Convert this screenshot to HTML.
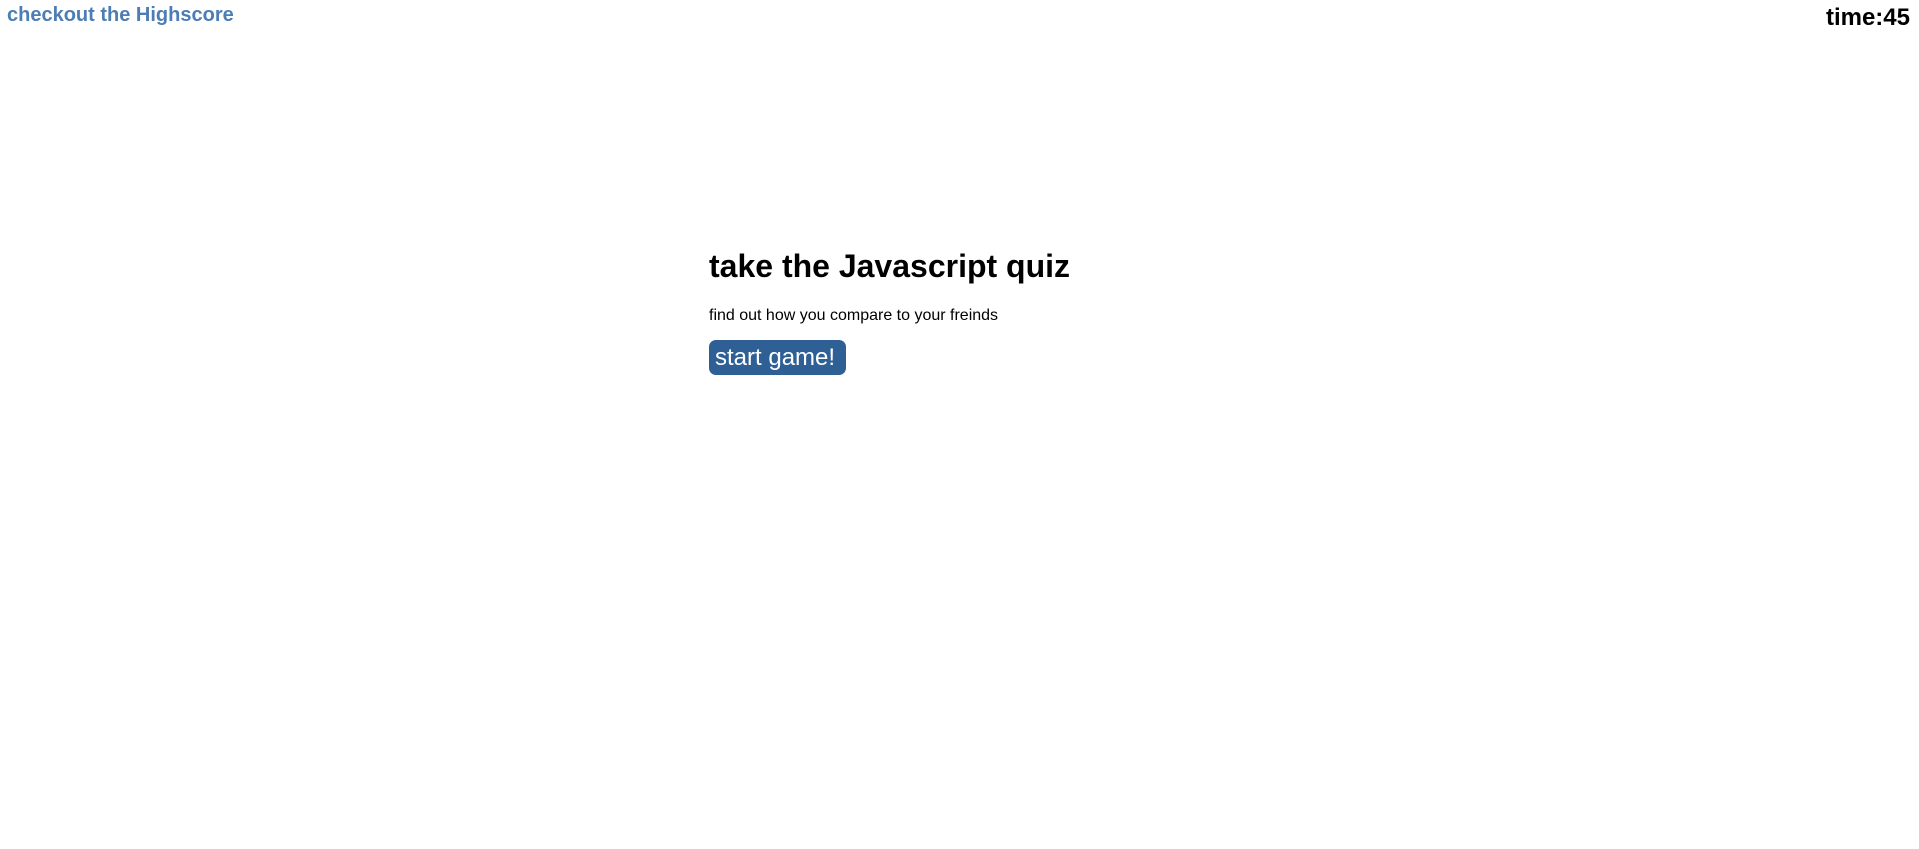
<!DOCTYPE html>
<html><head><style>
body{margin:0;width:1919px;height:849px;background:#fff;font-family:"Liberation Sans",Arial,sans-serif;position:relative;overflow:hidden}
.hs{position:absolute;left:7px;top:4px;font-size:20px;font-weight:bold;color:#4d7db5;text-decoration:none}
.time{position:absolute;right:9px;top:4px;font-size:24px;font-weight:bold;color:#000}
.main{position:absolute;left:709px;top:246px}
h1{margin:0;font-size:32px;font-weight:bold;line-height:40px}
p{margin:20px 0 0;font-size:16px;line-height:20px}
button{display:block;margin-top:14px;background:#2e6096;color:#fff;border:none;border-radius:7px;font-family:"Liberation Sans",Arial,sans-serif;font-size:24px;padding:2px 6px;height:35px;width:137px;text-align:left;line-height:31px}
</style></head><body>
<a class="hs" href="#">checkout the Highscore</a>
<div class="time">time:45</div>
<div class="main">
<h1>take the Javascript quiz</h1>
<p>find out how you compare to your freinds</p>
<button>start game!</button>
</div>
</body></html>
